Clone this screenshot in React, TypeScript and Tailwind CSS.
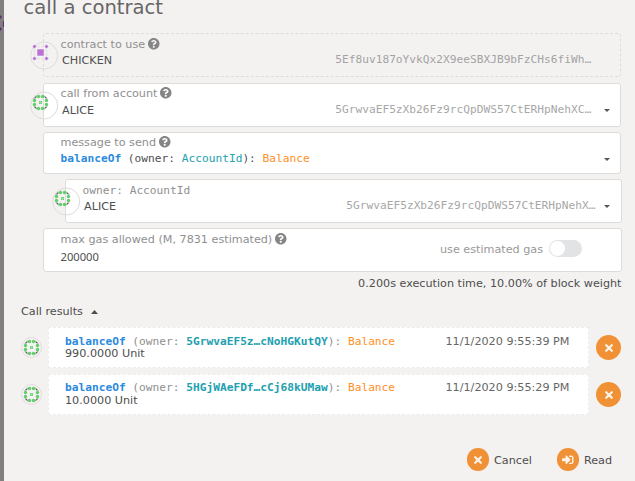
import React from 'react';

const sans = "font-['DejaVu_Sans',sans-serif]";
const mono = "font-['DejaVu_Sans_Mono',monospace]";

function Help() {
  return (
    <svg className="ml-[3px] size-[11.500px] shrink-0" viewBox="8 8 496 496">
      <path
        fill="#858585"
        d="M504 256c0 137-111 248-248 248S8 393 8 256 119 8 256 8s248 111 248 248zM262.700 90c-54.500 0-89.300 23-116.500 63.800-3.500 5.300-2.400 12.400 2.700 16.300l34.700 26.300c5.200 3.900 12.600 3 16.700-2.100 17.900-22.700 30.100-35.800 57.300-35.800 20.400 0 45.700 13.100 45.700 33 0 15-12.400 22.700-32.500 34C247.100 238.500 216 255 216 296v4c0 6.600 5.400 12 12 12h56c6.600 0 12-5.400 12-12v-1.300c0-28.500 83.200-29.600 83.200-106.700 0-58-60.200-102-116.500-102zM256 338c-25.400 0-46 20.600-46 46s20.600 46 46 46 46-20.600 46-46-20.600-46-46-46z"
      />
    </svg>
  );
}

const greenDots = [[-2, -6], [2, -6], [6, -2], [6, 2], [2, 6], [-2, 6], [-6, 2], [-6, -2]];

function GreenGlyph() {
  return (
    <g>
      <path d="M-6.800-4 L-4-6.800 L-4.500-4.500Z M6.800-4 L4-6.800 L4.500-4.500Z M-6.800 4 L-4 6.800 L-4.500 4.500Z M6.800 4 L4 6.800 L4.500 4.500Z" fill="#555" stroke="#777" strokeWidth=".3" />
      {greenDots.map(([x, y]) => <circle key={`${x},${y}`} cx={x} cy={y} r="1.700" fill="#5fd068" />)}
      <path d="M-1.500-1.500h3v3h-3z" fill="#74d47a" />
      <path d="M0-1.500v3M-1.500 0h3" stroke="#b9e9bc" strokeWidth=".3" />
    </g>
  );
}

function PurpleGlyph() {
  return (
    <g>
      {greenDots.map(([x, y]) => <circle key={`${x},${y}`} cx={x} cy={y} r="1.500" fill="#e9e8e8" />)}
      {[[-6, -6], [6, -6], [6, 6], [-6, 6]].map(([x, y]) => (
        <path key={`${x},${y}`} transform={`translate(${x} ${y})`} d="M0-2L2 0L0 2L-2 0Z" fill="#bb71d5" />
      ))}
      <path d="M-3.200-3.200h6.400v6.400h-6.400z" fill="#bb71d5" />
    </g>
  );
}

function FieldIcon({ purple = false }: { purple?: boolean }) {
  return (
    <svg className="absolute -left-[14px] top-[7px] size-[29px]" viewBox="0 0 29 29">
      <circle cx="14.200" cy="14.500" r="13.500" fill="none" stroke="#dddcdb" />
      <g transform="translate(10.500 11.500)">{purple ? <PurpleGlyph /> : <GreenGlyph />}</g>
    </svg>
  );
}

function Caret({ className }: { className: string }) {
  return (
    <svg className={`h-[3px] w-[6px] shrink-0 ${className}`} viewBox="0 0 6 3">
      <path d="M0 0h6L3 3z" fill="#555" />
    </svg>
  );
}

function Field({ className, label, help = true, children }: { className: string; label: React.ReactNode; help?: boolean; children: React.ReactNode }) {
  return (
    <div className={`relative flex flex-col rounded-[3px] border border-[#dddcdb] ${className}`}>
      <div className="flex h-[14px] items-start text-[#8f8f8f]">
        <span>{label}</span>
        {help && <Help />}
      </div>
      {children}
    </div>
  );
}

function Cross({ className }: { className: string }) {
  return (
    <svg className={className} viewBox="0 0 8 8">
      <path d="M1.200 1.200L6.800 6.800M6.800 1.200L1.200 6.800" stroke="#f9f3ec" strokeWidth="2.200" strokeLinecap="round" />
    </svg>
  );
}

function Result({ address, value, time, gap, pad }: { address: string; value: string; time: string; gap: string; pad: string }) {
  return (
    <div className="flex h-[41px] items-center">
      <svg className="size-[21px] shrink-0" viewBox="0 0 21 21">
        <circle cx="10.500" cy="10.500" r="10" fill="#f4f2f2" stroke="#dddcdb" />
        <g transform="translate(10.500 10.500)"><GreenGlyph /></g>
      </svg>
      <div className={`ml-[6px] flex h-[41px] w-[541px] justify-between border border-dashed border-[#eeecea] bg-white pl-[16px] pr-[18.500px] ${pad}`}>
        <div className={`flex flex-col ${gap}`}>
          <div className={`h-[12px] text-[#8f8f8f] ${mono}`}>
            <b className="text-[#2b8ade]">balanceOf</b> (owner: <b className="text-[#21a0b0]">{address}</b>): <span className="text-[#ff8f1f]">Balance</span>
          </div>
          <div className="h-[14px]">{value}</div>
        </div>
        <div className="text-[#666]">{time}</div>
      </div>
      <button className="ml-[7px] flex size-[25px] shrink-0 items-center justify-center rounded-full bg-[#f19135]">
        <Cross className="size-[8px]" />
      </button>
    </div>
  );
}

export default function App() {
  return (
    <div className={`flex h-[481px] w-[635px] overflow-hidden whitespace-pre bg-[#f4f2f1] text-[11.2px] leading-[14px] text-[#4e4e4e] ${sans}`}>
      <div className="w-[4px] shrink-0 overflow-hidden bg-[#807f7e]">
        <svg className="h-[40px] w-[4px]" viewBox="0 0 4 40">
          <path d="M0 15l2 2-2 2zM0 27l2 2-2 2zM3 21h1v6H3z" fill="#5f2b72" />
        </svg>
      </div>
      <main className="flex w-[631px] flex-col pl-[17px]">
        <h1 className="-mt-[4px] ml-[2.500px] h-[37px] text-[19.600px] leading-[24px] text-[#666]">call a contract</h1>
        <div className="ml-[22px] flex flex-col">
          <Field className="h-[44px] w-[578px] border-dashed border-[#d0cfce] pl-[16.500px] pt-[4px]" label="contract to use">
            <div className="mt-[2px] flex pl-[1.500px] pr-[28.800px]">
              <span>CHICKEN</span>
              <span className={`ml-auto -mt-px text-[#a3a3a3] ${mono}`}>5Ef8uv187oYvkQx2X9eeSBXJB9bFzCHs6fiWh…</span>
            </div>
            <FieldIcon purple />
          </Field>
          <Field className="mt-[6px] h-[44px] w-[578px] bg-white pl-[16.500px] pt-[3px]" label="call from account">
            <div className="mt-[3px] flex pl-[1.500px] pr-[10px]">
              <span>ALICE</span>
              <span className={`ml-auto -mt-px mr-[12.800px] text-[#a7a7a7] ${mono}`}>5GrwvaEF5zXb26Fz9rcQpDWS57CtERHpNehXC…</span>
              <Caret className="mt-[5px]" />
            </div>
            <FieldIcon />
          </Field>
          <Field className="mt-[5px] h-[42px] w-[578px] bg-white pl-[16.500px] pt-[3px]" label="message to send">
            <div className="mt-[2px] flex pr-[10px]">
              <span className={mono}>
                <b className="text-[#2b8ade]">balanceOf</b> (owner: <span className="text-[#21a0b0]">AccountId</span>): <span className="text-[#ff8f1f]">Balance</span>
              </span>
              <Caret className="ml-auto mt-[6px]" />
            </div>
          </Field>
          <Field className="ml-[22px] mt-[5px] h-[44px] w-[557px] bg-white pl-[16.500px] pt-[4px]" label={<span className={mono}>owner: AccountId</span>} help={false}>
            <div className="mt-[2px] flex pl-[1.500px] pr-[11px]">
              <span>ALICE</span>
              <span className={`ml-auto -mt-px mr-[8.500px] text-[#a7a7a7] ${mono}`}>5GrwvaEF5zXb26Fz9rcQpDWS57CtERHpNehX…</span>
              <Caret className="mt-[5px]" />
            </div>
            <FieldIcon />
          </Field>
          <div className="mt-[5px] flex h-[44px] w-[579px] rounded-[3px] border border-[#dddcdb] bg-white pl-[16.500px] pr-[39px] pt-[4px]">
            <div className="flex flex-col">
              <div className="flex h-[14px] text-[#8f8f8f]"><span>max gas allowed (M, 7831 estimated)</span><Help /></div>
              <div className="mt-[3px] font-['Noto_Sans',sans-serif]">200000</div>
            </div>
            <div className="ml-auto mt-[7px] flex h-[17px] items-center gap-[6px] text-[#999]">
              <span className="pt-[3px]">use estimated gas</span>
              <span className="flex h-[17px] w-[33px] rounded-full bg-[#e2e3e5] p-px"><i className="size-[15px] rounded-full bg-white" /></span>
            </div>
          </div>
          <div className="mt-[5px] w-[578.500px] text-right">0.200s execution time, 10.00% of block weight</div>
        </div>
        <div className="mt-[14px] flex items-center gap-[8px]">
          <span>Call results</span>
          <svg className="-mt-px h-[4px] w-[7px]" viewBox="0 0 7 4"><path d="M0 4h7L3.500 0z" fill="#4e4e4e" /></svg>
        </div>
        <div className="mt-[8px] flex flex-col gap-[6px]">
          <Result address="5GrwvaEF5z…cNoHGKutQY" value="990.0000 Unit" time="11/1/2020 9:55:39 PM" pad="pt-[7px]" gap="gap-0" />
          <Result address="5HGjWAeFDf…cCj68kUMaw" value="10.0000 Unit" time="11/1/2020 9:55:29 PM" pad="pt-[6px]" gap="gap-px" />
        </div>
        <div className="mr-[23px] mt-[33px] flex items-center justify-end gap-[25px]">
          <button className="flex items-center gap-[5px]">
            <span className="flex h-[23px] w-[22px] items-center justify-center rounded-full bg-[#f19135]"><Cross className="size-[8px]" /></span>
            <span className="pt-[3px]">Cancel</span>
          </button>
          <button className="flex items-center gap-[5px]">
            <span className="flex h-[23px] w-[22px] items-center justify-center rounded-full bg-[#f19135]">
              <svg className="size-[11.500px]" viewBox="0 0 512 512" fill="#f9f3ec">
                <path d="M416 448h-84c-6.600 0-12-5.400-12-12v-40c0-6.600 5.400-12 12-12h84c17.700 0 32-14.300 32-32V160c0-17.700-14.300-32-32-32h-84c-6.600 0-12-5.400-12-12V76c0-6.600 5.400-12 12-12h84c53 0 96 43 96 96v192c0 53-43 96-96 96zm-47-209L201 71c-15-15-41-4.500-41 17v96H24c-13.300 0-24 10.700-24 24v96c0 13.300 10.700 24 24 24h136v96c0 21.500 26 32 41 17l168-168c9.300-9.400 9.300-24.600 0-34z" />
              </svg>
            </span>
            <span className="pt-[3px]">Read</span>
          </button>
        </div>
      </main>
    </div>
  );
}
